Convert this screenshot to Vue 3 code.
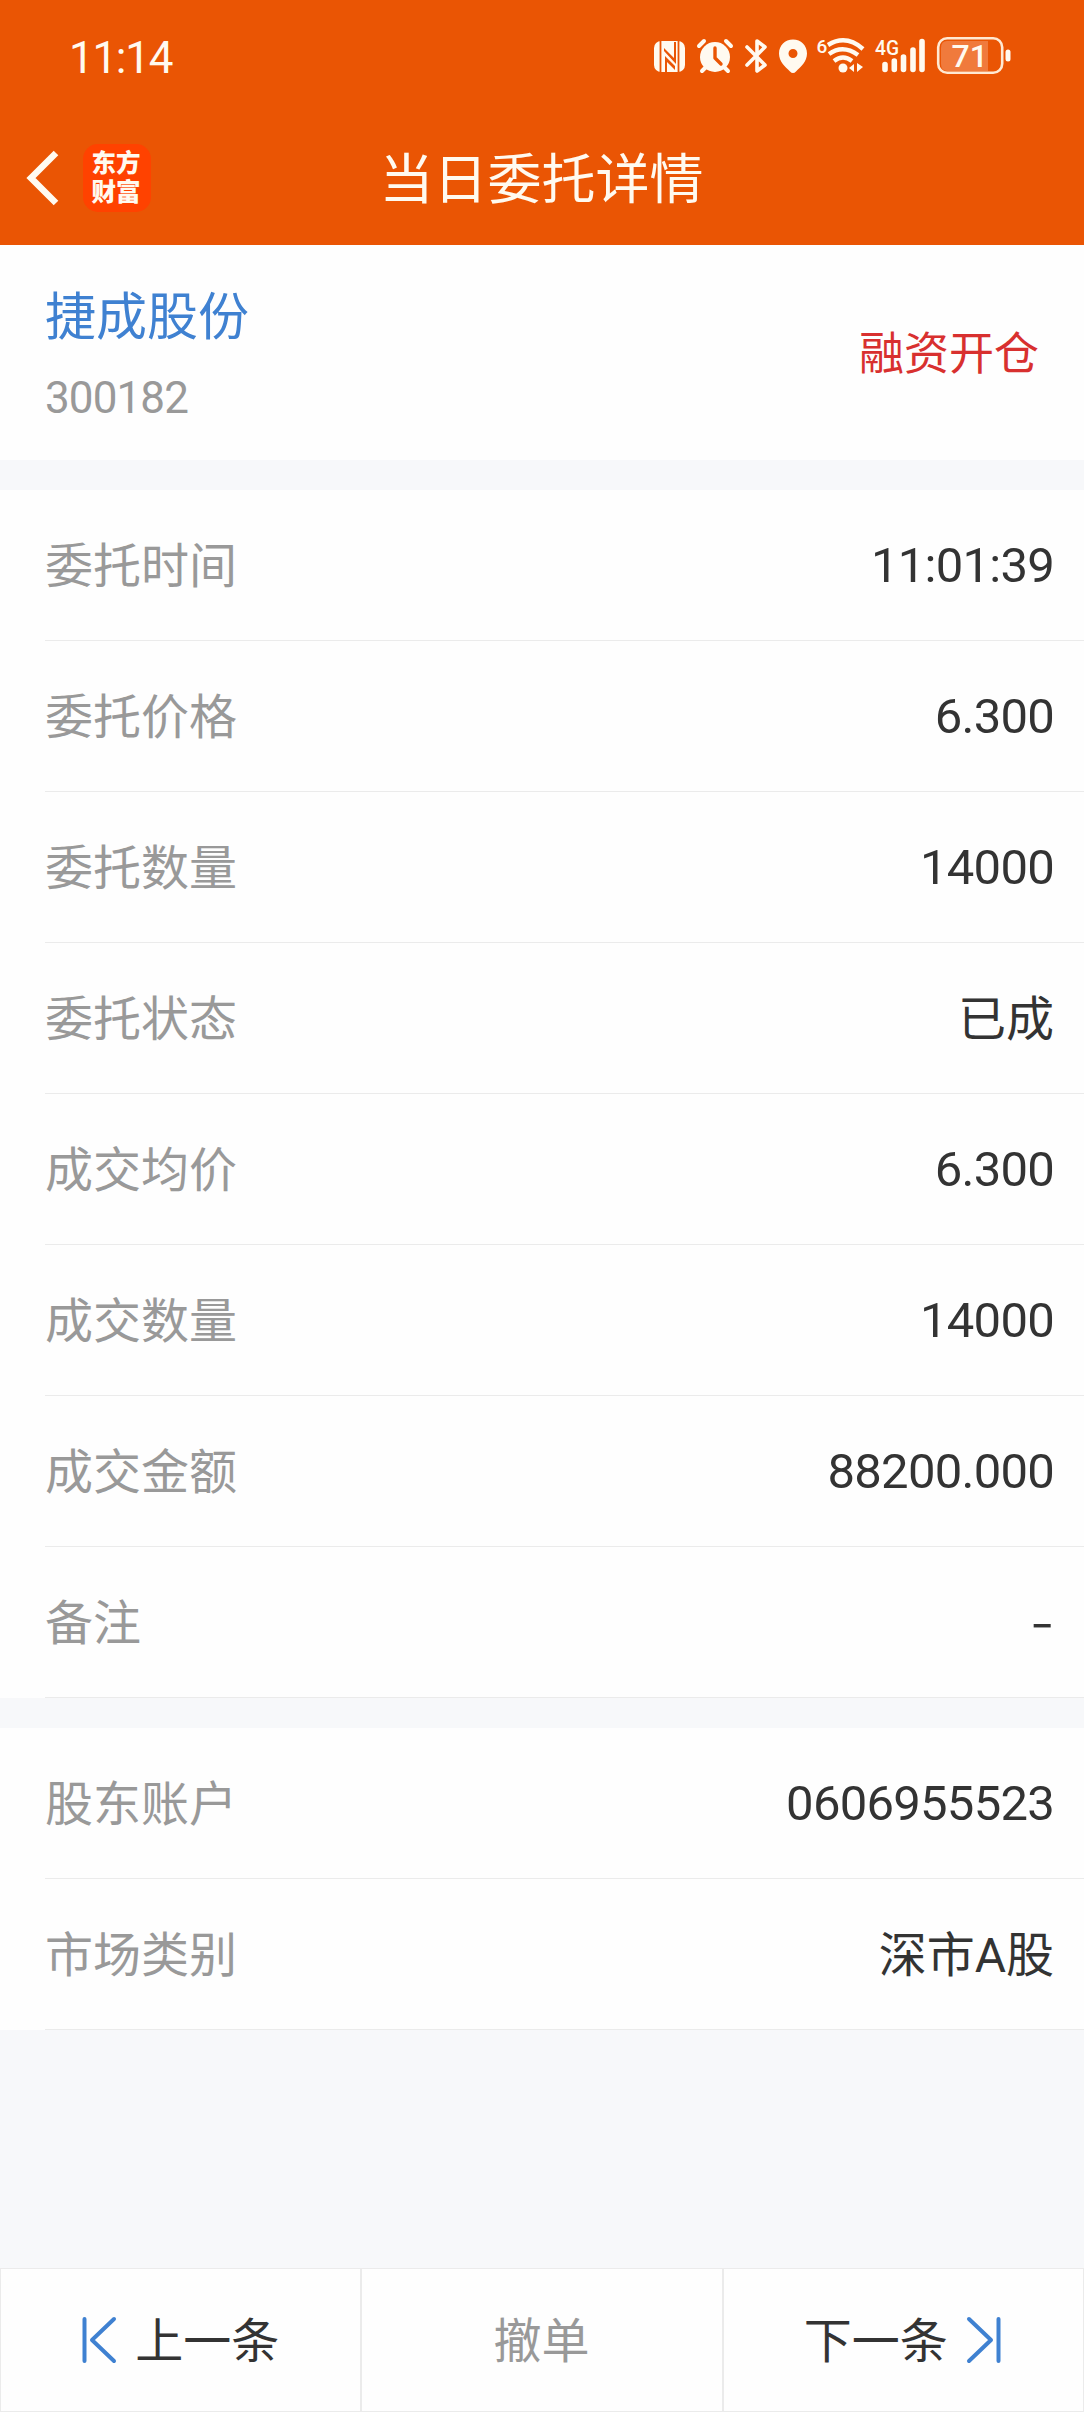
<template>
  <div class="page">
    <header class="header">
      <div class="status-bar">
        <span class="clock">11:14</span>
        <svg class="status-icons" width="370" height="50" viewBox="650 31 370 50" fill="#fffaf0">
          <!-- NFC -->
          <rect x="654" y="41" width="31" height="31" rx="7" />
          <g fill="none" stroke="#ea5504" stroke-width="1.8">
            <path d="M660.500 41V72M678.500 41V72" />
          </g>
          <path d="M664 48L674 58V42H676V64L664 51ZM665 56L675 66V70L667 62V72H665Z" fill="#ea5504" />
          <!-- 闹钟 -->
          <circle cx="715" cy="57" r="15" />
          <path d="M699 46L704 41M731 46L726 41M702 71L706 67M728 71L724 67" fill="none" stroke="#fffaf0" stroke-width="4" stroke-linecap="round" />
          <path d="M715 48V58L721 64" fill="none" stroke="#ea5504" stroke-width="3.4" stroke-linecap="round" stroke-linejoin="round" />
          <!-- 蓝牙 -->
          <path d="M747 47L765 65L757 71V41L765 47L747 65" fill="none" stroke="#fffaf0" stroke-width="3.6" stroke-linecap="round" stroke-linejoin="round" />
          <!-- 定位 -->
          <path fill-rule="evenodd" d="M793 39.500c-8 0-14 6-14 14 0 8 6 13 11 18q3 3 6 0c5-5 11-10 11-18 0-8-6-14-14-14zm0 9.500a4.500 4.500 0 1 1 0 9 4.500 4.500 0 0 1 0-9z" />
          <!-- Wi-Fi -->
          <text x="816.500" y="53" class="icon-text" font-size="19">6</text>
          <g fill="none" stroke="#fffaf0" stroke-width="4.400">
            <path d="M828 45Q846 34 863 49" />
            <path d="M829 54Q843 44 858 55" />
            <path d="M834 61Q843 54 852 61" />
          </g>
          <circle cx="843" cy="68" r="4.500" />
          <path d="M849 68l5-4v8zM863 67l-6-4v9z" />
          <!-- 信号 -->
          <text x="875" y="55" class="icon-text" font-size="20" textLength="24" lengthAdjust="spacingAndGlyphs">4G</text>
          <g fill="none" stroke="#fffaf0" stroke-width="5.600" stroke-linecap="round">
            <path d="M885 64.500V69.500M894.300 61V69.500M903.500 57V69.500M913 50V69.500M922 41.500V69.500" />
          </g>
          <!-- 电量 -->
          <rect x="938.200" y="38.200" width="64" height="34.600" rx="9" fill="none" stroke="#ffe9d2" stroke-width="2.600" />
          <path d="M947 41H988V71H947Q941 71 941 64V48Q941 41 947 41Z" fill="#f07a3c" />
          <rect x="1005.500" y="49.500" width="5" height="12" rx="2.500" />
          <text x="951.500" y="67" class="icon-text" font-size="32">71</text>
        </svg>
      </div>
      <div class="nav-bar">
        <svg class="back" width="36" height="58" viewBox="0 0 36 58">
          <path d="M31 4L6 29L31 54" fill="none" stroke="#fffaf0" stroke-width="6.5" />
        </svg>
        <div class="logo"><span>东方</span><span>财富</span></div>
        <h1 class="title">当日委托详情</h1>
      </div>
    </header>

    <section class="stock">
      <div>
        <div class="stock-name">捷成股份</div>
        <div class="stock-code">300182</div>
      </div>
      <div class="trade-type">融资开仓</div>
    </section>

    <section v-for="(rows, i) in sections" :key="i" class="section">
      <div v-for="row in rows" :key="row.label" class="row">
        <span class="label">{{ row.label }}</span>
        <span class="value" :class="{ cjk: row.cjk, empty: row.value === '-' }">{{ row.value }}</span>
      </div>
    </section>

    <footer class="footer">
      <button class="btn" type="button">
        <svg width="36" height="48" viewBox="0 0 36 48">
          <path d="M3.500 3V45M33 3L11 24L33 45" />
        </svg>
        <span>上一条</span>
      </button>
      <button class="btn" type="button" disabled><span>撤单</span></button>
      <button class="btn" type="button">
        <span>下一条</span>
        <svg width="36" height="48" viewBox="0 0 36 48">
          <path d="M32.500 3V45M3 3L25 24L3 45" />
        </svg>
      </button>
    </footer>
  </div>
</template>

<script setup>
const sections = [
  [
    { label: "委托时间", value: "11:01:39" },
    { label: "委托价格", value: "6.300" },
    { label: "委托数量", value: "14000" },
    { label: "委托状态", value: "已成", cjk: true },
    { label: "成交均价", value: "6.300" },
    { label: "成交数量", value: "14000" },
    { label: "成交金额", value: "88200.000" },
    { label: "备注", value: "-" },
  ],
  [
    { label: "股东账户", value: "0606955523" },
    { label: "市场类别", value: "深市A股", cjk: true },
  ],
];
</script>

<style>
body {
  background: #f7f8fa;
}
</style>

<style scoped>
.page {
  display: flex;
  flex-direction: column;
  height: 2412px;
  background: #f7f8fa;
  color: #333;
  font-family: Roboto, "Noto Sans CJK SC", sans-serif;
}
.header {
  height: 245px;
  background: #ea5504;
  color: #fffaf0;
}
.status-bar {
  display: flex;
  align-items: center;
  justify-content: space-between;
  height: 112px;
  padding: 0 64px 0 69px;
}
.clock {
  font-size: 44px;
  letter-spacing: -1.3px;
  padding-top: 3px;
}
.icon-text {
  font-family: Roboto, sans-serif;
  font-weight: 500;
}
.nav-bar {
  display: grid;
  grid-template-columns: 83px 68px 1fr 152px;
  align-items: center;
  height: 133px;
}
.back {
  margin: 0 0 1px 25px;
}
.logo {
  display: flex;
  flex-direction: column;
  align-items: center;
  justify-content: center;
  height: 68px;
  margin-bottom: 2px;
  padding: 0 2px 0 0;
  box-sizing: border-box;
  border-radius: 15px;
  background: #ff4200;
  font-size: 24.5px;
  font-weight: 900;
  line-height: 29px;
}
.title {
  margin: 0;
  padding-top: 4px;
  font-size: 54px;
  font-weight: 400;
  line-height: 80px;
  text-align: center;
}
.stock {
  display: flex;
  align-items: center;
  justify-content: space-between;
  height: 215px;
  padding: 0 45px;
  box-sizing: border-box;
  background: #fefefe;
}
.stock-name {
  margin-top: 10px;
  font-size: 51px;
  line-height: 76px;
  color: #3f81d1;
}
.stock-code {
  margin-top: 4px;
  font-size: 44px;
  line-height: 76px;
  letter-spacing: -0.9px;
  color: #999;
}
.trade-type {
  padding-bottom: 4px;
  font-size: 45px;
  color: #d8302f;
}
.section {
  margin-top: 30px;
  background: #fefefe;
}
.row {
  display: flex;
  align-items: center;
  justify-content: space-between;
  height: 151px;
  padding: 0 30px 0 45px;
  box-sizing: border-box;
  background: linear-gradient(#ebebeb, #ebebeb) 45px 100% / 100% 1px no-repeat;
  font-size: 48px;
}
.label {
  padding-bottom: 7px;
  color: #999;
}
.value {
  font-size: 49px;
  letter-spacing: -0.75px;
}
.value.cjk {
  padding-bottom: 7px;
  font-size: 48px;
  letter-spacing: 0;
}
.value.empty {
  font-family: Inter, sans-serif;
  font-size: 56px;
  font-weight: 300;
}
.footer {
  display: flex;
  height: 144px;
  margin-top: auto;
}
.btn {
  display: flex;
  flex: 1;
  align-items: center;
  justify-content: center;
  gap: 18px;
  padding: 0 1px 0 0;
  border: 1px solid #ebebeb;
  background: #fefefe;
  color: #333;
  font-family: inherit;
  font-size: 48px;
}
.btn span {
  padding-bottom: 7px;
}
.btn:disabled {
  color: #999;
}
.btn path {
  fill: none;
  stroke: #3f81d1;
  stroke-width: 4;
  stroke-linecap: round;
  stroke-linejoin: round;
}
</style>
